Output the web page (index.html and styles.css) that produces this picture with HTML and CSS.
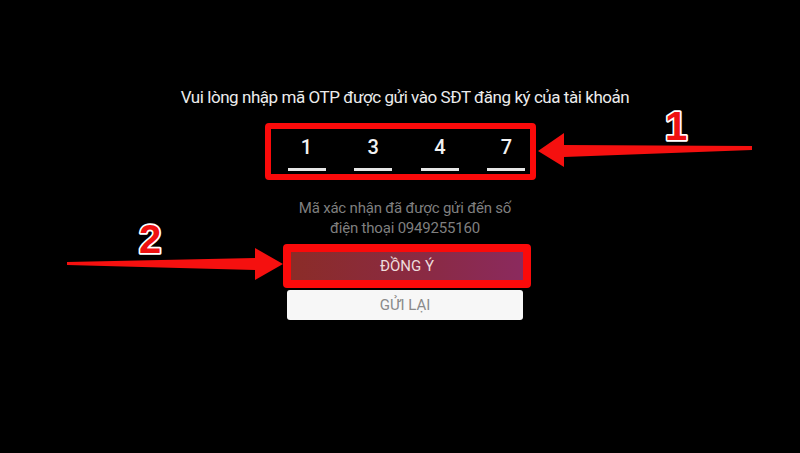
FILE: index.html
```html
<!DOCTYPE html>
<html lang="vi">
<head>
<meta charset="utf-8">
<title>OTP</title>
<link rel="stylesheet" href="styles.css">
</head>
<body>
<main class="screen">
  <p class="title">Vui lòng nhập mã OTP được gửi vào SĐT đăng ký của tài khoản</p>
  <div class="highlight otp-box">
    <div class="otp">
      <div class="cell"><span class="digit">1</span><span class="line"></span></div>
      <div class="cell"><span class="digit">3</span><span class="line"></span></div>
      <div class="cell"><span class="digit">4</span><span class="line"></span></div>
      <div class="cell"><span class="digit">7</span><span class="line"></span></div>
    </div>
  </div>
  <p class="note">Mã xác nhận đã được gửi đến số<br>điện thoại 0949255160</p>
  <div class="highlight btn-box">
    <button class="btn btn-primary">ĐỒNG Ý</button>
  </div>
  <button class="btn btn-secondary">GỬI LẠI</button>

  <svg class="annotations" width="800" height="453" viewBox="0 0 800 453">
    <polygon class="arrow" points="752,146 564,145 564,133 538,151 564,167 564,157 752,150"/>
    <polygon class="arrow" points="67,262 255,258 255,248 283,264 255,280 255,270 67,265"/>
    <text class="badge" x="676" y="140">1</text>
    <text class="badge" x="150" y="253">2</text>
  </svg>
</main>
</body>
</html>
```
FILE: styles.css
```css
html, body {
  margin: 0;
  padding: 0;
  background: #000;
}
.screen {
  position: relative;
  width: 800px;
  height: 453px;
  box-sizing: border-box;
  padding: 87px 0 0 10px;
  display: flex;
  flex-direction: column;
  align-items: center;
  font-family: Roboto, "Noto Sans", sans-serif;
  overflow: hidden;
}
.title {
  margin: 0;
  font-size: 17px;
  line-height: 20px;
  color: #ececec;
  letter-spacing: -0.45px;
}
.highlight {
  border: 6px solid #fb0a0a;
  border-radius: 4px;
}
.otp-box {
  margin: 16px 10px 0 0;
  width: 259px;
  box-sizing: content-box;
}
.otp {
  display: grid;
  grid-template-columns: repeat(4, 38px);
  column-gap: 28.67px;
  padding: 6px 4px 3px 17px;
}
.cell {
  display: flex;
  flex-direction: column;
  align-items: center;
}
.digit {
  font-size: 20px;
  line-height: 24px;
  font-weight: 500;
  color: #f2f2f2;
}
.line {
  margin-top: 9px;
  width: 38px;
  height: 3px;
  background: #e6e6e6;
}
.note {
  margin: 18px 0 0;
  font-size: 15px;
  line-height: 20px;
  color: #7f7f7f;
  text-align: center;
  letter-spacing: -0.2px;
}
.btn-box {
  margin: 6px 0 0 4px;
  border-width: 8px;
  border-radius: 4px;
}
.btn {
  display: flex;
  align-items: center;
  justify-content: center;
  border: 0;
  margin: 0;
  padding: 0;
  font-family: Roboto, "Noto Sans", sans-serif;
  font-size: 15px;
}
.btn-primary {
  width: 232px;
  height: 28px;
  background: linear-gradient(90deg, #8b2c28 0%, #8a2a45 60%, #8b2a5e 100%);
  color: #eddcdc;
}
.btn-secondary {
  margin-top: 2px;
  width: 236px;
  height: 30px;
  border-radius: 3px;
  background: #f7f7f7;
  color: #8a8a8a;
}
.annotations {
  position: absolute;
  left: 0;
  top: 0;
  pointer-events: none;
}
.arrow {
  fill: #f5100f;
}
.badge {
  font-family: "Liberation Sans", Arial, sans-serif;
  font-weight: 700;
  font-size: 40px;
  text-anchor: middle;
  fill: #ee1111;
  stroke: #ffffff;
  stroke-width: 3.5px;
  paint-order: stroke;
  stroke-linejoin: round;
}
```
